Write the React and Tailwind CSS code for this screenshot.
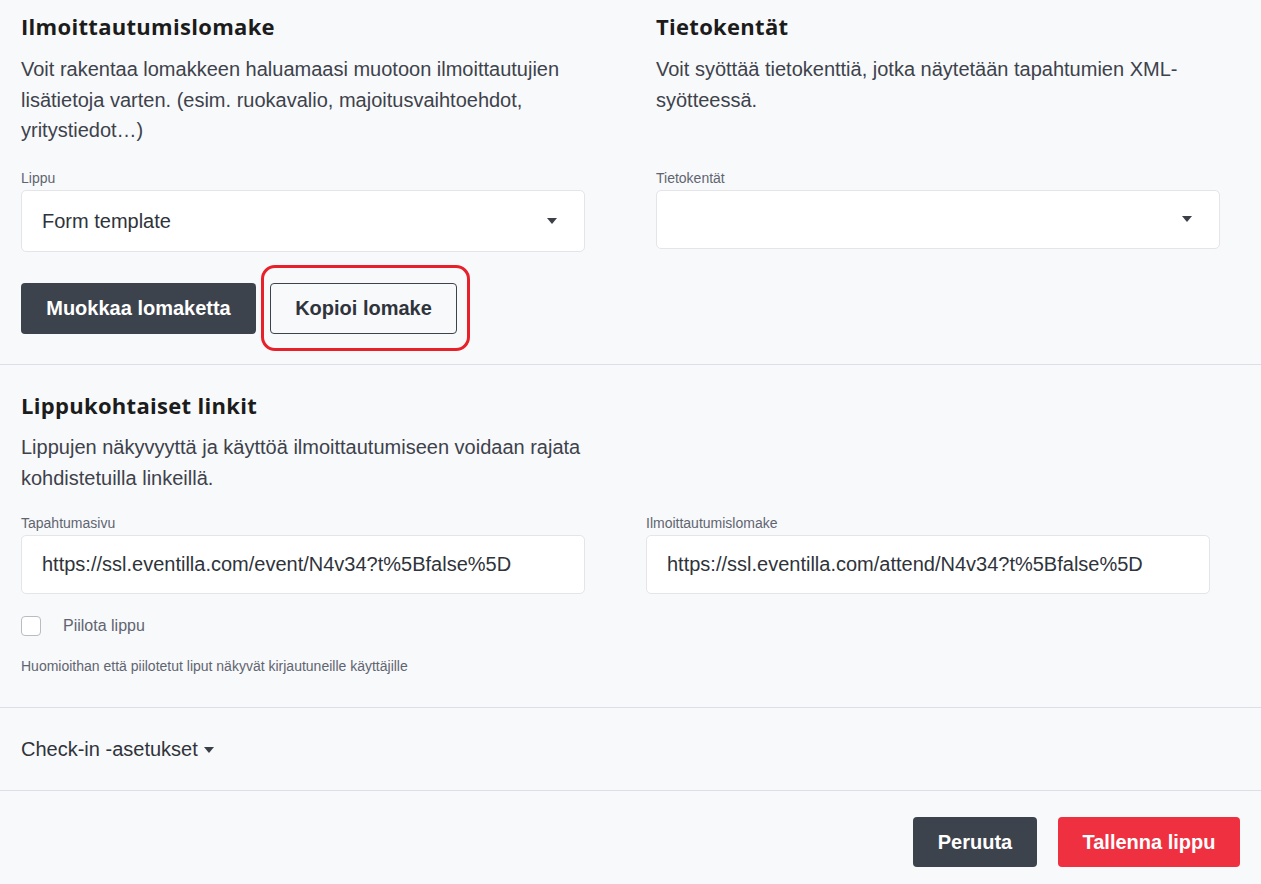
import React from 'react';

const Caret = ({ className = '' }) => (
  <svg className={className} width="10" height="6" viewBox="0 0 10 6">
    <path d="M0 0h10L5 6z" fill="#3b3f47" />
  </svg>
);

const Label = ({ children }) => (
  <div className="text-[14px] leading-5 text-[#5f6570]">{children}</div>
);

const Heading = ({ children }) => (
  <h2 className="font-[family-name:'Open_Sans',sans-serif] text-[22px] leading-[29px] font-bold tracking-[0.3px] text-[#1c1c1c]">
    {children}
  </h2>
);

const Intro = ({ children }) => (
  <p className="mt-[13px] text-[20px] leading-[30.5px] text-[#3d424b]">{children}</p>
);

const SelectBox = ({ value, h }) => (
  <div
    className={`mt-[2px] flex items-center justify-between rounded-[5px] border border-[#e3e5e9] bg-white pl-[20px] pr-[27px] text-[20px] text-[#2f333a] ${h}`}
  >
    <span>{value}</span>
    <Caret />
  </div>
);

const LinkField = ({ label, url }) => (
  <div>
    <Label>{label}</Label>
    <div className="mt-[2px] flex h-[59px] items-center rounded-[5px] border border-[#e3e5e9] bg-white px-[20px] text-[20px] text-[#2f333a]">
      {url}
    </div>
  </div>
);

export default function App() {
  return (
    <div className="min-h-[884px] w-[1261px] bg-[#f8f9fb] font-[family-name:'Liberation_Sans',Arial,sans-serif]">
      {/* lomake + tietokentät */}
      <section className="border-b border-[#dcdfe3] px-[21px] pt-[12px] pb-[30px]">
        <div className="grid grid-cols-[564px_564px] gap-x-[71px]">
          <div>
            <Heading>Ilmoittautumislomake</Heading>
            <Intro>
              Voit rakentaa lomakkeen haluamaasi muotoon ilmoittautujien lisätietoja varten. (esim.
              ruokavalio, majoitusvaihtoehdot, yritystiedot…)
            </Intro>
          </div>
          <div>
            <Heading>Tietokentät</Heading>
            <Intro>Voit syöttää tietokenttiä, jotka näytetään tapahtumien XML-syötteessä.</Intro>
          </div>
          <div className="mt-[22px]">
            <Label>Lippu</Label>
            <SelectBox value="Form template" h="h-[62px]" />
          </div>
          <div className="mt-[22px]">
            <Label>Tietokentät</Label>
            <SelectBox value="" h="h-[59px]" />
          </div>
        </div>
        <div className="mt-[31px] flex gap-[14px]">
          <button className="h-[51px] w-[235px] rounded-[4px] bg-[#3d434d] text-[20px] font-bold text-white">
            Muokkaa lomaketta
          </button>
          <div className="relative">
            <button className="h-[51px] w-[187px] rounded-[4px] border border-[#3d434d] text-[20px] font-bold text-[#2f343c]">
              Kopioi lomake
            </button>
            <div className="pointer-events-none absolute -left-[9px] -top-[18px] h-[86px] w-[209px] rounded-[14px] border-[3px] border-[#e8202a]" />
          </div>
        </div>
      </section>

      {/* lippukohtaiset linkit */}
      <section className="border-b border-[#dcdfe3] px-[21px] pt-[26px] pb-[31px]">
        <Heading>Lippukohtaiset linkit</Heading>
        <p className="mt-[12px] w-[564px] text-[20px] leading-[31px] text-[#3d424b]">
          Lippujen näkyvyyttä ja käyttöä ilmoittautumiseen voidaan rajata kohdistetuilla linkeillä.
        </p>
        <div className="mt-[19px] grid grid-cols-[564px_564px] gap-x-[61px]">
          <LinkField label="Tapahtumasivu" url="https://ssl.eventilla.com/event/N4v34?t%5Bfalse%5D" />
          <LinkField
            label="Ilmoittautumislomake"
            url="https://ssl.eventilla.com/attend/N4v34?t%5Bfalse%5D"
          />
        </div>
        <label className="mt-[20px] flex items-center gap-[22px]">
          <span className="h-[20px] w-[20px] rounded-[4px] border border-[#b8bcc3] bg-white" />
          <span className="text-[16px] text-[#5f6570]">Piilota lippu</span>
        </label>
        <p className="mt-[18px] text-[14px] leading-5 text-[#5f6570]">
          Huomioithan että piilotetut liput näkyvät kirjautuneille käyttäjille
        </p>
      </section>

      {/* check-in */}
      <section className="flex h-[83px] items-center border-b border-[#dcdfe3] px-[21px]">
        <span className="text-[20px] text-[#2f333a]">Check-in -asetukset</span>
        <Caret className="ml-[6px] mt-[2px]" />
      </section>

      <div className="flex justify-end gap-[21px] px-[21px] pt-[26px]">
        <button className="h-[50px] w-[124px] rounded-[4px] bg-[#3d434d] text-[20px] font-bold text-white">
          Peruuta
        </button>
        <button className="h-[50px] w-[182px] rounded-[4px] bg-[#ee3040] text-[20px] font-bold text-white">
          Tallenna lippu
        </button>
      </div>
    </div>
  );
}
